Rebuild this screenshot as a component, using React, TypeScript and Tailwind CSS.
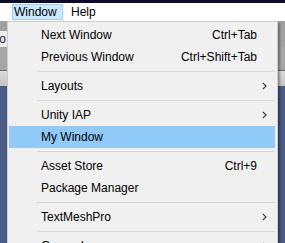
import { Fragment } from 'react';

type Item =
  | { kind: 'item'; label: string; shortcut?: string; sub?: boolean; active?: boolean }
  | { kind: 'sep' };

const items: Item[] = [
  { kind: 'item', label: 'Next Window', shortcut: 'Ctrl+Tab' },
  { kind: 'item', label: 'Previous Window', shortcut: 'Ctrl+Shift+Tab' },
  { kind: 'sep' },
  { kind: 'item', label: 'Layouts', sub: true },
  { kind: 'sep' },
  { kind: 'item', label: 'Unity IAP', sub: true },
  { kind: 'item', label: 'My Window', active: true },
  { kind: 'sep' },
  { kind: 'item', label: 'Asset Store', shortcut: 'Ctrl+9' },
  { kind: 'item', label: 'Package Manager' },
  { kind: 'sep' },
  { kind: 'item', label: 'TextMeshPro', sub: true },
  { kind: 'sep' },
  { kind: 'item', label: 'General', sub: true },
];

function Chevron() {
  return (
    <svg width="5" height="8" viewBox="0 0 5 8" className="block">
      <path d="M0.8 0.8 L4 4 L0.8 7.2" fill="none" stroke="#3a3a3a" strokeWidth="1.2" />
    </svg>
  );
}

export default function App() {
  return (
    <div className="relative w-[285px] h-[243px] overflow-hidden bg-[#a1a1a1] font-['Liberation_Sans',Arial,sans-serif] text-[12px] text-black">
      {/* editor behind the menu */}
      <div className="flex flex-col h-full">
        <div className="h-[3px] bg-[#0c0c2c]" />
        <div className="h-[18px] bg-white flex items-center">
          <div className="ml-[12px] w-[51px] h-[16px] pl-[2px] flex items-center bg-[#cce8ff] border border-[#99d1ff]">
            <span className="-ml-[1px]">Window</span>
          </div>
          <span className="ml-[8px]">Help</span>
        </div>
        <div className="h-[10px] bg-[#a1a1a1]" />
        <div className="h-[16px] flex">
          <div className="w-[7px] bg-[#ececec] flex justify-end items-center overflow-hidden">
            <span className="text-[#222] pr-[1px]">o</span>
          </div>
          <div className="flex-1 bg-[#a1a1a1]" />
        </div>
        <div className="h-[23px] bg-[#a6a6a6]" />
        <div className="h-[1px] bg-[#6b6b6b]" />
        <div className="h-[15px] bg-gradient-to-b from-[#dcdcdc] to-[#c4c4c4]" />
        <div className="flex-1 bg-[#475b84]" />
      </div>

      {/* dropdown */}
      <div className="absolute left-[7px] top-[21px] w-[271px] bg-[#f0f0f0] border border-[#cccccc] pt-[2px] pb-[2px] pl-[1px] pr-[2px] shadow-[2px_2px_2px_rgba(0,0,0,0.35)]">
        {items.map((it, i) => (
          <Fragment key={i}>
            {it.kind === 'sep' ? (
              <div className="py-[3px] pl-[28px]">
                <div className="h-[1px] bg-[#d7d7d7]" />
              </div>
            ) : (
              <div className={`h-[22px] flex items-center pl-[32px] ${it.active ? 'bg-[#91c9f7]' : ''}`}>
                <span className="flex-1">{it.label}</span>
                {it.shortcut && <span>{it.shortcut}</span>}
                <div className="w-[18px] pl-[5px] flex items-center">{it.sub && <Chevron />}</div>
              </div>
            )}
          </Fragment>
        ))}
      </div>
    </div>
  );
}
